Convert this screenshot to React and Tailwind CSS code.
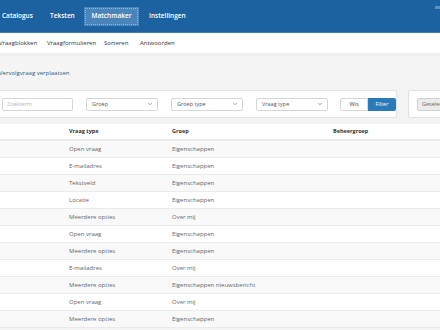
import { FiChevronDown } from "react-icons/fi"

const rows = [
  ["Open vraag", "Eigenschappen"],
  ["E-mailadres", "Eigenschappen"],
  ["Tekstveld", "Eigenschappen"],
  ["Locatie", "Eigenschappen"],
  ["Meerdere opties", "Over mij"],
  ["Open vraag", "Eigenschappen"],
  ["Meerdere opties", "Eigenschappen"],
  ["E-mailadres", "Over mij"],
  ["Meerdere opties", "Eigenschappen nieuwsbericht"],
  ["Open vraag", "Over mij"],
  ["Meerdere opties", "Eigenschappen"],
]

function Select({ label }) {
  return (
    <div className="w-[72px] h-[13px] border border-[#d6d6d6] rounded-[2px] bg-white flex items-center justify-between pl-[5px] pr-[4px] text-[5.5px] text-[#555]">
      <span>{label}</span>
      <FiChevronDown size={6} className="text-[#444]" />
    </div>
  )
}

export default function App() {
  return (
    <div className="w-[440px] h-[330px] overflow-hidden bg-[#f4f4f4] font-['Open_Sans',sans-serif]">
      {/* Main nav */}
      <div className="h-[33px] bg-[#1c62a0] border-b border-[#3f7db3] flex items-center relative">
        <div className="flex items-center text-white text-[6.5px] font-semibold">
          <span className="ml-[2px] w-[48px]">Catalogus</span>
          <span className="w-[34px]">Teksten</span>
          <span className="w-[55px] h-[19px] flex items-center justify-center bg-[#4985ba] outline-1 outline-dotted outline-[#8fb5d8] -outline-offset-2">Matchmaker</span>
          <span className="ml-[10px]">Instellingen</span>
        </div>
        <div className="absolute right-0 top-[6px] w-[5px] h-[3px] bg-[#5b8fc0]" />
      </div>

      {/* Sub nav */}
      <div className="h-[20px] bg-white flex items-center text-[6px] text-[#333] font-medium">
        <span className="-ml-[1px] w-[48px]">Vraagblokken</span>
        <span className="w-[57px]">Vraagformulieren</span>
        <span className="w-[36px]">Sorteren</span>
        <span>Antwoorden</span>
      </div>

      <div className="h-[3px] bg-[#efefef]" />

      <div className="pt-[13px] leading-[9px] -ml-[1px] text-[6px] text-[#2d5f8c]">Vervolgvraag verplaatsen</div>

      {/* Filters */}
      <div className="flex items-start gap-[11px] mt-[12px]">
        <div className="w-[401px] h-[28px] bg-white border border-[#e2e2e2] rounded-r-[3px] border-l-0 flex items-center pl-[2px] gap-[13px]">
          <div className="w-[71px] h-[13px] border border-[#d6d6d6] rounded-[2px] pl-[4px] flex items-center text-[5.5px] text-[#b5b5b5]">Zoekterm</div>
          <Select label="Groep" />
          <Select label="Groep type" />
          <Select label="Vraag type" />
          <div className="flex ml-[-1px]">
            <div className="w-[28px] h-[13px] border border-[#d6d6d6] rounded-l-[2px] bg-white flex items-center justify-center text-[5.5px] text-[#444]">Wis</div>
            <div className="w-[28px] h-[13px] rounded-r-[2px] bg-[#2a79b8] flex items-center justify-center text-[5.5px] text-white">Filter</div>
          </div>
        </div>
        <div className="flex-1 h-[28px] bg-white border border-r-0 border-[#e2e2e2] rounded-l-[3px] flex items-center pl-[8px]">
          <div className="h-[13px] pl-[4px] bg-[#ececec] border border-[#d0d0d0] rounded-l-[2px] flex items-center text-[5.5px] text-[#666] whitespace-nowrap">Geselecteerd</div>
        </div>
      </div>

      {/* Table */}
      <div className="mt-[6px] bg-white text-[6px] text-[#666]">
        <div className="grid grid-cols-[66px_103px_161px_1fr] h-[17px] items-center font-bold text-[#333] text-[5.5px] border-b-2 border-[#ececec]">
          <div />
          <div className="pl-[3px]">Vraag type</div>
          <div className="pl-[3px]">Groep</div>
          <div className="pl-[3px]">Beheergroep</div>
        </div>
        {rows.map(([type, group], i) => (
          <div
            key={i}
            className={`grid grid-cols-[66px_103px_161px_1fr] h-[17px] items-center border-b border-[#ebebeb] ${i % 2 === 0 ? "bg-[#f9f9f9]" : "bg-white"}`}
          >
            <div />
            <div className="pl-[3px]">{type}</div>
            <div className="pl-[3px] whitespace-nowrap">{group}</div>
            <div />
          </div>
        ))}
      </div>
    </div>
  )
}
